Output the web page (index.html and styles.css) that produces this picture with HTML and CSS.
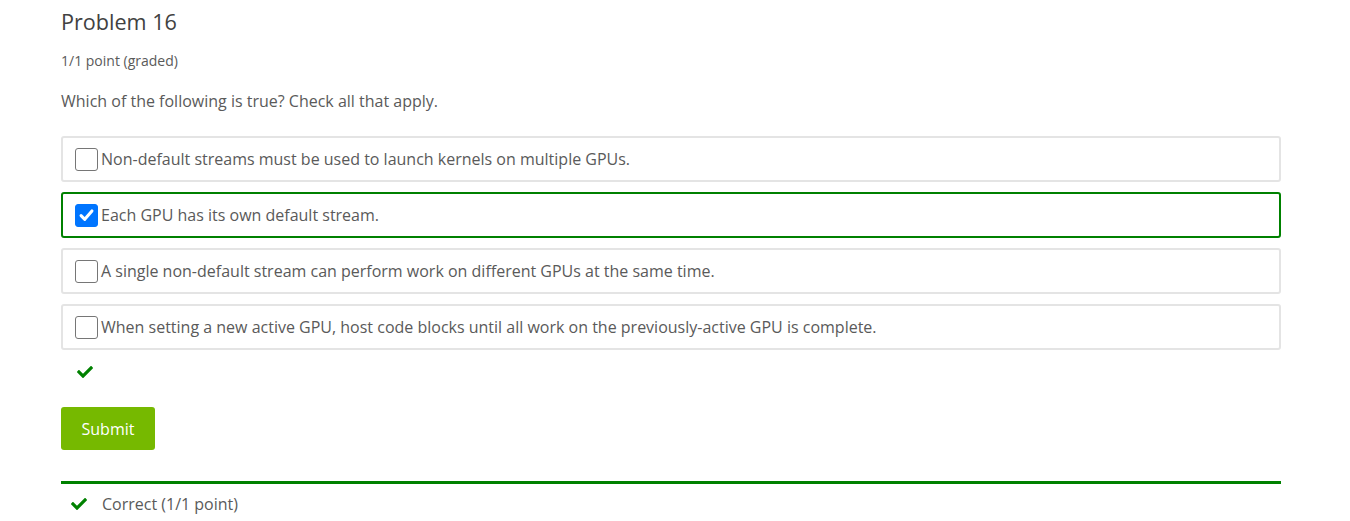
FILE: index.html
```html
<!DOCTYPE html>
<html>
<head>
<meta charset="utf-8">
<link rel="stylesheet" href="styles.css">
</head>
<body>
<div class="problem">
  <h3 class="title">Problem 16</h3>
  <div class="points">1/1 point (graded)</div>
  <p class="question">Which of the following is true? Check all that apply.</p>
  <div class="choices">
    <label class="choice">
      <span class="box"></span>
      <span class="text">Non-default streams must be used to launch kernels on multiple GPUs.</span>
    </label>
    <label class="choice selected">
      <span class="box checked"><svg viewBox="0 0 22 22" width="22" height="22"><path d="M5.3 11.6l3.9 3.9 7.5-8.8" fill="none" stroke="#fff" stroke-width="3.2" stroke-linecap="round" stroke-linejoin="round"/></svg></span>
      <span class="text">Each GPU has its own default stream.</span>
    </label>
    <label class="choice">
      <span class="box"></span>
      <span class="text">A single non-default stream can perform work on different GPUs at the same time.</span>
    </label>
    <label class="choice">
      <span class="box"></span>
      <span class="text">When setting a new active GPU, host code blocks until all work on the previously-active GPU is complete.</span>
    </label>
  </div>
  <div class="status">
    <svg class="check" viewBox="0 0 512 512" width="16" height="16"><path d="M173.898 439.404l-166.4-166.4c-9.997-9.997-9.997-26.206 0-36.204l36.203-36.204c9.997-9.998 26.207-9.998 36.204 0L192 312.69 432.095 72.596c9.997-9.997 26.207-9.997 36.204 0l36.203 36.204c9.997 9.997 9.997 26.206 0 36.204l-294.4 294.401c-9.998 9.997-26.207 9.997-36.204-.001z" fill="#008100"/></svg>
  </div>
  <button class="submit">Submit</button>
  <div class="notification">
    <svg class="check" viewBox="0 0 512 512" width="16" height="16"><path d="M173.898 439.404l-166.4-166.4c-9.997-9.997-9.997-26.206 0-36.204l36.203-36.204c9.997-9.998 26.207-9.998 36.204 0L192 312.69 432.095 72.596c9.997-9.997 26.207-9.997 36.204 0l36.203 36.204c9.997 9.997 9.997 26.206 0 36.204l-294.4 294.401c-9.998 9.997-26.207 9.997-36.204-.001z" fill="#008100"/></svg>
    <span class="message">Correct (1/1 point)</span>
  </div>
</div>
</body>
</html>
```
FILE: styles.css
```css
* { box-sizing: border-box; }
body {
  margin: 0;
  background: #fff;
  font-family: "Open Sans", "Liberation Sans", sans-serif;
  color: #5a5a5a;
}
.problem {
  width: 1220px;
  margin-left: 61px;
  padding-top: 7px;
}
.title {
  margin: 0;
  font-size: 21.6px;
  font-weight: 400;
  line-height: 30px;
  color: #414141;
}
.points {
  margin-top: 15px;
  font-size: 14px;
  line-height: 18px;
}
.question {
  margin: 20px 0 0;
  font-size: 16px;
  line-height: 22px;
}
.choices {
  margin-top: 24px;
  display: flex;
  flex-direction: column;
  gap: 10px;
}
.choice {
  display: flex;
  align-items: center;
  height: 46px;
  padding: 0 12px;
  border: 2px solid #e4e4e4;
  border-radius: 3px;
  font-size: 16px;
  line-height: 22px;
}
.choice.selected {
  border-color: #008100;
}
.box {
  flex: none;
  width: 23px;
  height: 23px;
  margin-right: 3px;
  border: 1px solid #767676;
  border-radius: 3px;
  background: #fff;
  display: flex;
  align-items: center;
  justify-content: center;
}
.box.checked {
  background: #0075ff;
  border-color: #0075ff;
}
.status {
  height: 57px;
  padding: 14px 0 0 16px;
}
.check { display: block; }
.submit {
  display: block;
  width: 94px;
  height: 43px;
  border: none;
  border-radius: 3px;
  background: #76b900;
  color: #fff;
  font-family: "Open Sans", "Liberation Sans", sans-serif;
  font-size: 16px;
  padding: 0;
}
.notification {
  margin-top: 31px;
  border-top: 3px solid #008100;
  display: flex;
  align-items: center;
  padding: 2px 0 0 10px;
  height: 40px;
}
.message {
  margin-left: 15px;
  font-size: 16px;
  line-height: 22px;
}
```
